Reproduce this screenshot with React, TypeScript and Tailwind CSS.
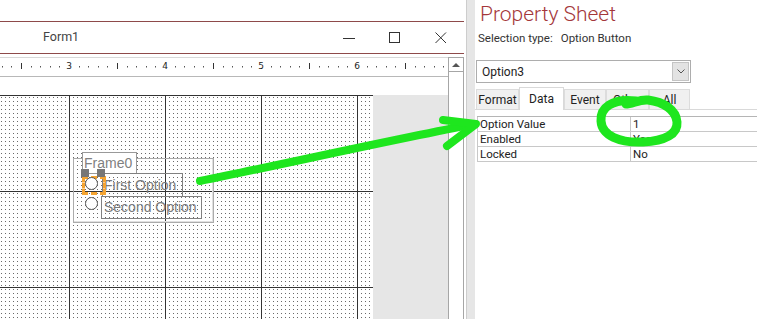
import React from 'react';

const ui = "font-['Roboto','Noto_Sans',sans-serif]";
const ctl = "font-['Liberation_Sans','Arial',sans-serif]";

const Ruler: React.FC = () => {
  const marks: React.ReactNode[] = [];
  for (let k = -8; k <= 40; k++) {
    const x = 69 + 9.6 * k;
    if (x < 0 || x > 446) continue;
    const m = ((k % 10) + 10) % 10;
    if (m === 0) {
      marks.push(
        <text key={k} x={x} y={11} textAnchor="middle" fontSize="9" fontFamily="DejaVu Sans, sans-serif" fill="#222">
          {3 + k / 10}
        </text>
      );
    } else if (m === 5) {
      marks.push(<rect key={k} x={Math.round(x)} y={5} width={1} height={6} fill="#333" />);
    } else {
      marks.push(<rect key={k} x={Math.round(x)} y={8} width={1} height={1.5} fill="#555" />);
    }
  }
  return (
    <svg width="448" height="18" className="block">
      {marks}
    </svg>
  );
};

const DesignGrid: React.FC = () => (
  <svg width="373" height="224" className="absolute left-0 top-0">
    <defs>
      <pattern id="dots" x="1" y="1" width="4" height="4" patternUnits="userSpaceOnUse">
        <rect width="1" height="1" fill="#6a6a6a" />
      </pattern>
    </defs>
    <rect width="373" height="224" fill="url(#dots)" />
    {[69, 165, 261, 357].map((x) => (
      <rect key={x} x={x} y={0} width={1} height={224} fill="#333" />
    ))}
    {[95, 191].map((y) => (
      <rect key={y} x={0} y={y} width={373} height={1} fill="#333" />
    ))}
  </svg>
);

const Tab: React.FC<{ label: string; active?: boolean; w: string }> = ({ label, active, w }) =>
  active ? (
    <div className={`${w} h-[23px] -mb-px bg-white border border-b-0 border-[#d9d9d9] flex items-start justify-center pt-[2px] text-[12px] text-[#222] relative z-10`}>
      {label}
    </div>
  ) : (
    <div className={`${w} h-[20px] bg-[#f0f0f0] border border-b-0 border-[#dcdcdc] flex items-center justify-center text-[12px] text-[#222]`}>
      {label}
    </div>
  );

const rows = [
  ['Option Value', '1'],
  ['Enabled', 'Yes'],
  ['Locked', 'No'],
];

export default function App() {
  return (
    <div className={`relative w-[757px] h-[319px] overflow-hidden bg-white flex ${ui}`}>
      {/* Form design window */}
      <div className="w-[464px] flex flex-col">
        <div className="h-[21px]" />
        <div className="h-[33px] border-y border-[#8e4a4a] flex items-center">
          <div className="w-[326px] pl-[43px] text-[12.5px] text-[#444]">Form1</div>
          <div className="w-[46px] flex justify-center">
            <svg width="12" height="12"><rect x="0" y="6" width="12" height="1" fill="#333" /></svg>
          </div>
          <div className="w-[46px] flex justify-center">
            <svg width="12" height="12"><rect x="0.5" y="0.5" width="10" height="10" fill="none" stroke="#333" /></svg>
          </div>
          <div className="w-[46px] flex justify-center">
            <svg width="12" height="12"><path d="M0.5 0.5 L11 11 M11 0.5 L0.5 11" stroke="#333" strokeWidth="1" /></svg>
          </div>
        </div>
        <div className="h-[3px]" />
        <div className="flex-1 flex">
          <div className="w-[448px] flex flex-col">
            <div className="h-[20px] border-t border-[#d8d8d8] border-b border-b-[#b8b8b8]">
              <Ruler />
            </div>
            <div className="h-[18px]" />
            <div className="flex-1 flex">
              <div className="w-[373px] border-t border-[#333] relative">
                <DesignGrid />
                {/* Frame and option buttons */}
                <div className="absolute left-[73px] top-[62px] w-[141px] h-[65px] border border-[#ababab] shadow-[inset_-1px_-1px_0_#e0e0e0]" />
                <div className={`absolute left-[82px] top-[56px] w-[55px] h-[22px] bg-white border border-[#999] text-[14px] leading-[20px] pl-[1px] text-[#7f7f7f] ${ctl}`}>
                  Frame0
                </div>
                <div className={`absolute left-[102px] top-[77px] w-[81px] h-[24px] border border-[#808080] text-[14px] leading-[22px] pl-[1px] text-[#7a7a7a] ${ctl}`}>
                  First Option
                </div>
                <div className={`absolute left-[101px] top-[100px] w-[101px] h-[23px] border border-[#808080] text-[14px] leading-[21px] pl-[2px] text-[#7a7a7a] ${ctl}`}>
                  Second Option
                </div>
                <div className="absolute left-[82px] top-[80px] w-[24px] h-[19px] border-[3px] border-dashed border-[#f5a431]" />
                <div className="absolute left-[85px] top-[81px] w-[13px] h-[13px] rounded-full border border-[#555] bg-white" />
                <div className="absolute left-[85px] top-[101px] w-[13px] h-[13px] rounded-full border border-[#555] bg-white" />
                <div className="absolute left-[81px] top-[73px] w-[8px] h-[8px] bg-[#777]" />
                <div className="absolute left-[97px] top-[73px] w-[8px] h-[8px] bg-[#777]" />
              </div>
              <div className="flex-1 bg-[#e6e6e6]" />
            </div>
          </div>
          {/* Vertical scrollbar */}
          <div className="w-[16px] border-x border-t border-[#a6a6a6] flex flex-col">
            <div className="h-[14px] border-b border-[#a6a6a6] flex items-center justify-center">
              <svg width="8" height="5"><path d="M0 5 L4 1 L8 5 Z" fill="#555" /></svg>
            </div>
          </div>
        </div>
      </div>

      {/* Splitter */}
      <div className="w-[11px] flex">
        <div className="w-[2px]" />
        <div className="w-[1px] bg-[#cdcdcd]" />
        <div className="flex-1 bg-[#e6e6e6]" />
      </div>

      {/* Property sheet */}
      <div className="flex-1 flex flex-col">
        <div className="h-[30px] pl-[5px] text-[21px] leading-[28px] font-light text-[#a4373a]">Property Sheet</div>
        <div className="pl-[3px] text-[11.5px] text-[#333] flex gap-[8px]">
          <span>Selection type:</span>
          <span>Option Button</span>
        </div>
        <div className="ml-[1px] mt-[13px] w-[215px] h-[23px] border border-[#adadad] flex items-center pl-[5px] text-[12px] text-[#222]">
          <span className="flex-1">Option3</span>
          <div className="w-[17px] h-[19px] mr-[1px] bg-[#e3e3e3] border border-[#c4c4c4] flex items-center justify-center">
            <svg width="8" height="5"><path d="M0.5 0.5 L4 4 L7.5 0.5" fill="none" stroke="#555" /></svg>
          </div>
        </div>
        <div className="ml-[1px] mt-[4px] flex items-end">
          <Tab label="Format" w="w-[43px]" />
          <Tab label="Data" active w="w-[45px]" />
          <Tab label="Event" w="w-[42px]" />
          <Tab label="Other" w="w-[43px]" />
          <Tab label="All" w="w-[41px]" />
        </div>
        <div className="flex-1 border-t border-[#d9d9d9] pt-[6px] pl-[2px]">
          <div className="border-t border-[#b5b5b5]">
            {rows.map(([k, v]) => (
              <div key={k} className="h-[15px] flex border-b border-l border-[#c8c8c8] text-[11.5px] leading-[14px] text-[#222]">
                <div className="w-[153px] border-r border-[#c8c8c8] pl-[2px]">{k}</div>
                <div className="flex-1 pl-[2px]">{v}</div>
              </div>
            ))}
          </div>
        </div>
      </div>

      {/* Green annotation */}
      <svg width="757" height="319" className="absolute left-0 top-0 pointer-events-none">
        <g fill="none" stroke="#1ee61e" strokeWidth="8" strokeLinecap="round" strokeLinejoin="round">
          <path d="M200 181 C 280 165, 390 140, 475 124" />
          <path d="M443 120 L476 124 L447 146" />
          <path d="M636 101 C 612 98, 600 108, 601 121 C 602 136, 620 143, 643 142 C 665 141, 678 134, 677 122 C 676 110, 664 102, 648 100 C 640 99, 632 104, 626 104" strokeWidth="9" />
        </g>
      </svg>
    </div>
  );
}
